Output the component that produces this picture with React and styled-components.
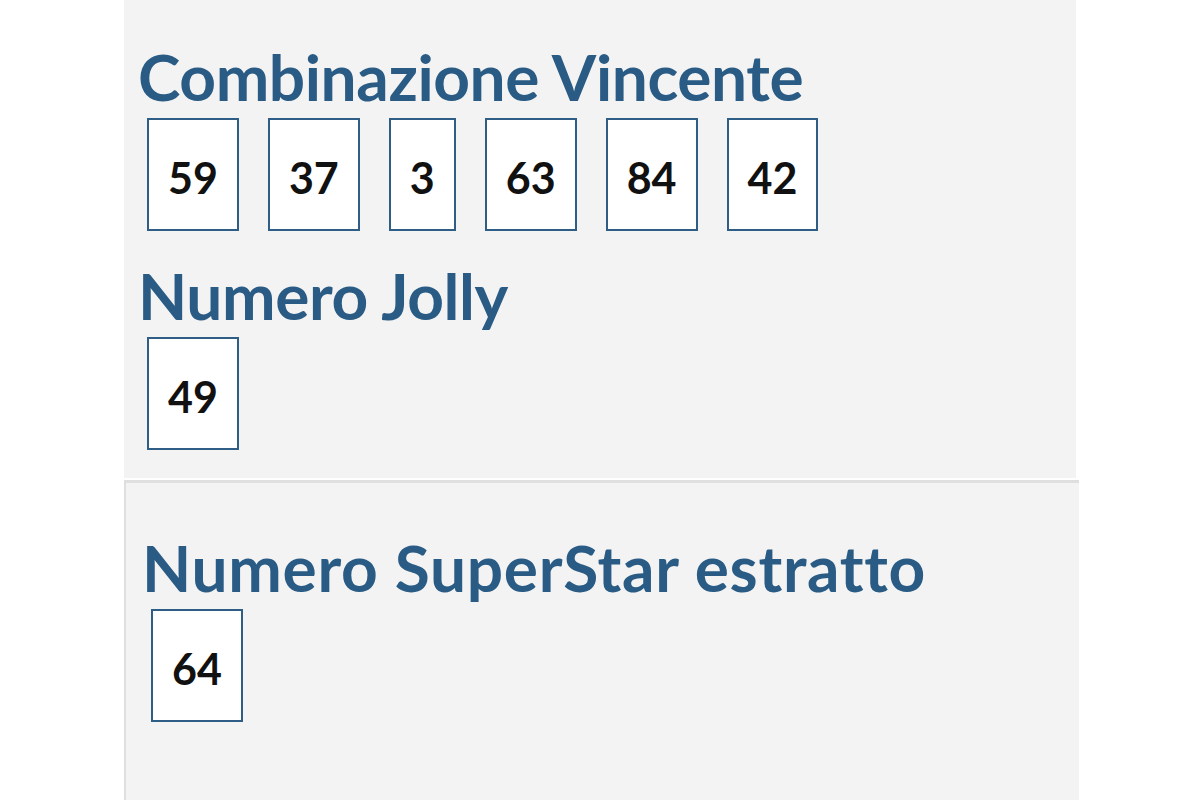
import styled, { createGlobalStyle } from "styled-components";

const GlobalStyle = createGlobalStyle`
  html, body {
    margin: 0;
    padding: 0;
    background: #ffffff;
  }
  body {
    font-family: "Lato", "Open Sans", sans-serif;
  }
`

const Page = styled.div`
  width: 1200px;
  height: 800px;
  overflow: hidden;
  padding-left: 124px;
  box-sizing: border-box;
  background: #ffffff;
`

const Panel = styled.section`
  width: 952px;
  background-color: #f3f3f3;
  padding: 45px 0 28px 14px;
  box-sizing: border-box;
`

const LowerPanel = styled.section`
  width: 955px;
  height: 322px;
  margin-top: 2px;
  background-color: #f3f3f3;
  border-top: 3px solid #dfdfdf;
  border-left: 2px solid #dfdfdf;
  padding: 53px 0 0 16px;
  box-sizing: border-box;
`

const Title = styled.h2`
  margin: 0;
  font-size: 64px;
  line-height: 64px;
  font-weight: 700;
  letter-spacing: ${(p) => p.$spacing || "-0.4px"};
  color: #295b84;
  white-space: nowrap;
`

const Numbers = styled.div`
  display: flex;
  gap: 29px;
  margin: 9px 0 ${(p) => p.$after || "0"} 9px;
`

const Ball = styled.div`
  height: 113px;
  box-sizing: border-box;
  display: flex;
  align-items: center;
  padding: 5px 19px 0;
  background: #ffffff;
  border: 2px solid #2e5d85;
  font-size: 43px;
  line-height: 43px;
  font-weight: 700;
  color: #111111;
`

const winning = [59, 37, 3, 63, 84, 42]

const App = () => {
  return (
    <Page>
      <GlobalStyle />
      <Panel>
        <Title>Combinazione Vincente</Title>
        <Numbers $after="33px">
          {winning.map((n) => (
            <Ball key={n}>{n}</Ball>
          ))}
        </Numbers>
        <Title>Numero Jolly</Title>
        <Numbers>
          <Ball>49</Ball>
        </Numbers>
      </Panel>
      <LowerPanel>
        <Title $spacing="0.7px">Numero SuperStar estratto</Title>
        <Numbers>
          <Ball>64</Ball>
        </Numbers>
      </LowerPanel>
    </Page>
  )
}

export default App
